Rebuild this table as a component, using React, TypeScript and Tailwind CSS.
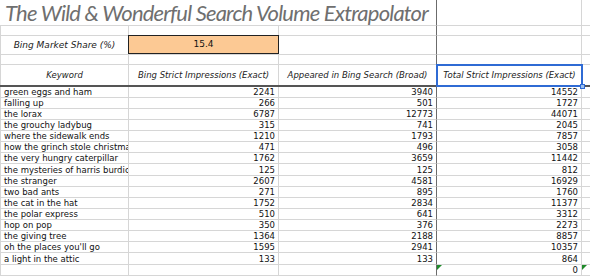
import React from "react";

const data: [string, number, number, number][] = [
  ["green eggs and ham", 2241, 3940, 14552],
  ["falling up", 266, 501, 1727],
  ["the lorax", 6787, 12773, 44071],
  ["the grouchy ladybug", 315, 741, 2045],
  ["where the sidewalk ends", 1210, 1793, 7857],
  ["how the grinch stole christmas", 471, 496, 3058],
  ["the very hungry caterpillar", 1762, 3659, 11442],
  ["the mysteries of harris burdick", 125, 125, 812],
  ["the stranger", 2607, 4581, 16929],
  ["two bad ants", 271, 895, 1760],
  ["the cat in the hat", 1752, 2834, 11377],
  ["the polar express", 510, 641, 3312],
  ["hop on pop", 350, 376, 2273],
  ["the giving tree", 1364, 2188, 8857],
  ["oh the places you'll go", 1595, 2941, 10357],
  ["a light in the attic", 133, 133, 864],
];

const heights = [11, 11, 11, 11, 11, 11, 11, 12, 11, 11, 11, 11, 11, 11, 11, 12];

function Tri() {
  return (
    <svg className="absolute left-0 top-0" width="5" height="5" viewBox="0 0 5 5">
      <polygon points="0,0 5,0 0,5" fill="#1f8a2a" />
    </svg>
  );
}

export default function App() {
  return (
    <div className="w-[590px] h-[276px] overflow-hidden bg-white text-[#111] font-['DejaVu_Sans',sans-serif] text-[8.5px] leading-none">
      {/* title row */}
      <div className="flex h-[26px]">
        <div className="w-[437px] border-r border-r-[#6b6b6b] border-b border-b-[#d6d6d6] flex items-center pl-[5px] overflow-hidden whitespace-nowrap">
          <span className="font-['Lato',sans-serif] italic text-[22px] tracking-[-0.8px] text-[#6f6f6f] leading-none">
            The Wild &amp; Wonderful Search Volume Extrapolator
          </span>
        </div>
        <div className="w-[145px] border-r border-b border-[#d6d6d6]" />
        <div className="flex-1 border-b border-[#d6d6d6]" />
      </div>
      {/* spacer row */}
      <div className="flex h-[10px]">
        <div className="w-[129px] border-l border-r border-b border-[#d6d6d6]" />
        <div className="w-[150px] border-r border-b border-[#d6d6d6]" />
        <div className="w-[158px] border-r border-r-[#6b6b6b] border-b border-b-[#d6d6d6]" />
        <div className="w-[145px] border-r border-b border-[#d6d6d6]" />
        <div className="flex-1 border-b border-[#d6d6d6]" />
      </div>
      {/* market share row */}
      <div className="flex h-[19px]">
        <div className="w-[129px] border-l border-r border-b border-[#d6d6d6] flex items-center justify-center italic text-[9px] text-[#222]">
          Bing Market Share (%)
        </div>
        <div className="w-[150px] border-b border-[#d6d6d6] relative">
          <div className="absolute left-[-1px] top-[-1px] right-0 bottom-0 bg-[#fcc994] border-[1.5px] border-[#222] flex items-center justify-center text-[9px]">
            15.4
          </div>
        </div>
        <div className="w-[158px] border-r border-r-[#6b6b6b] border-b border-b-[#d6d6d6]" />
        <div className="w-[145px] border-r border-b border-[#d6d6d6]" />
        <div className="flex-1 border-b border-[#d6d6d6]" />
      </div>
      {/* spacer row */}
      <div className="flex h-[10px]">
        <div className="w-[129px] border-l border-r border-b border-[#d6d6d6]" />
        <div className="w-[150px] border-r border-b border-[#d6d6d6]" />
        <div className="w-[158px] border-r border-r-[#6b6b6b] border-b border-b-[#d6d6d6]" />
        <div className="w-[145px] border-r border-b border-[#d6d6d6]" />
        <div className="flex-1 border-b border-[#d6d6d6]" />
      </div>
      {/* header row */}
      <div className="flex h-[22px] border-b-2 border-b-[#555]">
        <div className="w-[129px] border-l border-r border-[#d6d6d6] flex items-center justify-center italic text-[#222]">
          Keyword
        </div>
        <div className="w-[150px] border-r border-[#d6d6d6] flex items-center justify-center italic text-[#222]">
          Bing Strict Impressions (Exact)
        </div>
        <div className="w-[158px] border-r border-r-[#6b6b6b] flex items-center justify-center italic text-[#222]">
          Appeared in Bing Search (Broad)
        </div>
        <div className="w-[145px] relative flex items-center justify-center italic text-[#222]">
          <div className="absolute left-[-1px] top-[-1px] right-[-1px] bottom-[-2px] border-2 border-[#2f6bd4]" />
          <div className="absolute right-[-3px] bottom-[-4px] w-[5px] h-[5px] bg-[#9ec0ee] border border-[#2f6bd4]" />
          Total Strict Impressions (Exact)
        </div>
        <div className="flex-1" />
      </div>
      {/* data rows */}
      {data.map((r, i) => (
        <div key={i} className="flex" style={{ height: heights[i] }}>
          <div className="w-[129px] border-l border-r border-b border-[#d6d6d6] pl-[3px] overflow-hidden whitespace-nowrap flex items-end pb-[1px]">
            {r[0]}
          </div>
          <div className="w-[150px] border-r border-b border-[#d6d6d6] pr-[3px] flex items-end justify-end pb-[1px]">
            {r[1]}
          </div>
          <div className="w-[158px] border-r border-r-[#6b6b6b] border-b border-b-[#d6d6d6] pr-[3px] flex items-end justify-end pb-[1px]">
            {r[2]}
          </div>
          <div className="w-[145px] border-r border-b border-[#d6d6d6] pr-[3px] flex items-end justify-end pb-[1px]">
            {r[3]}
          </div>
          <div className="flex-1 border-b border-[#d6d6d6]" />
        </div>
      ))}
      {/* empty row with 0 */}
      <div className="flex h-[11px]">
        <div className="w-[129px] border-l border-r border-b border-[#d6d6d6]" />
        <div className="w-[150px] border-r border-b border-[#d6d6d6]" />
        <div className="w-[158px] border-r border-r-[#6b6b6b] border-b border-b-[#d6d6d6]" />
        <div className="w-[145px] border-r border-b border-[#d6d6d6] pr-[3px] flex items-end justify-end pb-[1px] relative">
          <Tri />
          0
        </div>
        <div className="flex-1 border-b border-[#d6d6d6] relative">
          <Tri />
        </div>
      </div>
      <div className="flex h-[2px]">
        <div className="w-[129px] border-l border-r border-[#d6d6d6]" />
        <div className="w-[150px] border-r border-[#d6d6d6]" />
        <div className="w-[158px] border-r border-r-[#6b6b6b]" />
        <div className="w-[145px] border-r border-[#d6d6d6]" />
      </div>
    </div>
  );
}
